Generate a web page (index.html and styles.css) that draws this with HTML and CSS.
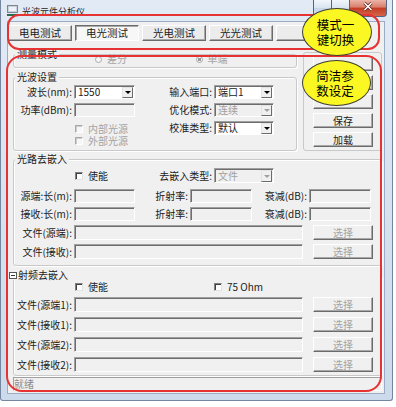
FILE: index.html
```html
<!DOCTYPE html>
<html>
<head>
    <title>光波元件分析仪</title>
    <link rel="stylesheet" href="styles.css">
</head>
<body>
    <div class="window">
        <div class="titlebar">
            <svg class="app-icon" width="11" height="12" viewBox="0 0 11 12">
                <rect x="0.5" y="0.5" width="10" height="7" fill="#c9d1da" stroke="#7d8793"/>
                <rect x="2" y="2" width="7" height="4" fill="#eef2f6"/>
                <rect x="0" y="9" width="11" height="2" fill="#2f6b4a"/>
            </svg>
            <span class="title">光波元件分析仪</span>
            <div class="caption">
                <span class="cap cap-min"></span>
                <span class="cap cap-max"></span>
                <span class="cap cap-close">
                    <svg width="10" height="9" viewBox="0 0 10 9">
                        <path d="M1.5 1 8.5 8M8.5 1 1.5 8" stroke="#5b1d16" stroke-width="3"/>
                        <path d="M1.5 1 8.5 8M8.5 1 1.5 8" stroke="#fff" stroke-width="1.6"/>
                    </svg>
                </span>
            </div>
        </div>

        <div class="client">
            <!-- mode switch buttons (the last one sits under the callout) -->
            <div class="modes">
                <div class="mode-btn">电电测试</div>
                <div class="mode-btn on">电光测试</div>
                <div class="mode-btn">光电测试</div>
                <div class="mode-btn">光光测试</div>
                <div class="mode-btn"></div>
            </div>

            <div class="upper">
                <div class="upper-left">
                    <div class="group mode-group">
                        <div class="group-title">测量模式</div>
                        <div class="radio-row">
                            <span class="radio"><i></i>差分</span>
                            <span class="radio on"><i></i>单端</span>
                        </div>
                    </div>

                    <div class="group wave-group">
                        <div class="group-title">光波设置</div>
                        <div class="wave-grid">
                            <label>波长(nm):</label>
                            <div class="combo"><span>1550</span><i class="drop"></i></div>
                            <label>输入端口:</label>
                            <div class="combo"><span>端口1</span><i class="drop"></i></div>

                            <label>功率(dBm):</label>
                            <div class="edit off"></div>
                            <label>优化模式:</label>
                            <div class="combo off"><span>连续</span><i class="drop"></i></div>

                            <div class="checks">
                                <span class="check off"><i></i>内部光源</span>
                                <span class="check off"><i></i>外部光源</span>
                            </div>
                            <label class="cal-label">校准类型:</label>
                            <div class="combo cal-combo"><span>默认</span><i class="drop"></i></div>
                        </div>
                    </div>
                </div>

                <!-- the top three buttons are covered by the callout -->
                <div class="side-panel">
                    <div class="btn"></div>
                    <div class="btn"></div>
                    <div class="btn"></div>
                    <div class="btn">保存</div>
                    <div class="btn">加载</div>
                </div>
            </div>

            <div class="group optic-group">
                <div class="group-title">光路去嵌入</div>
                <div class="row-top">
                    <span class="check"><i></i>使能</span>
                    <label>去嵌入类型:</label>
                    <div class="combo off"><span>文件</span><i class="drop"></i></div>
                </div>
                <div class="len-grid">
                    <label>源端:长(m):</label><div class="edit off"></div>
                    <label>折射率:</label><div class="edit off"></div>
                    <label>衰减(dB):</label><div class="edit off"></div>
                    <label>接收:长(m):</label><div class="edit off"></div>
                    <label>折射率:</label><div class="edit off"></div>
                    <label>衰减(dB):</label><div class="edit off"></div>
                </div>
                <div class="file-grid">
                    <label>文件(源端):</label><div class="edit off"></div><div class="btn off">选择</div>
                    <label>文件(接收):</label><div class="edit off"></div><div class="btn off">选择</div>
                </div>
            </div>

            <div class="group rf-group">
                <div class="group-title rf-title"><i class="fold"></i>射频去嵌入</div>
                <div class="row-top rf-top">
                    <span class="check"><i></i>使能</span>
                    <span class="check ohm"><i></i>75 Ohm</span>
                </div>
                <div class="file-grid rf-files">
                    <label>文件(源端1):</label><div class="edit off"></div><div class="btn off">选择</div>
                    <label>文件(接收1):</label><div class="edit off"></div><div class="btn off">选择</div>
                    <label>文件(源端2):</label><div class="edit off"></div><div class="btn off">选择</div>
                    <label>文件(接收2):</label><div class="edit off"></div><div class="btn off">选择</div>
                </div>
            </div>

            <div class="status">就绪</div>
        </div>
    </div>

    <!-- annotations drawn over the dialog -->
    <div class="mark mark-modes"></div>
    <div class="mark mark-params"></div>
    <div class="callout callout-modes">模式一<br>键切换</div>
    <div class="callout callout-params">简洁参<br>数设定</div>
</body>
</html>
```

FILE: styles.css
```css
* {
  box-sizing: border-box;
}

body {
  margin: 0;
  position: relative;
  width: 396px;
  height: 407px;
  overflow: hidden;
  background: #fff;
  font-family: "Noto Sans CJK SC", "Liberation Sans", sans-serif;
  font-size: 10px;
  line-height: 12px;
  color: #1b1b1b;
}

/* window frame */
.window {
  display: flex;
  flex-direction: column;
  width: 393px;
  height: 401px;
  padding: 0 7px 6px 6px;
  background: linear-gradient(#e2eaf5, #cddaeb);
  border: 1px solid #74879f;
  border-top: 0;
  border-radius: 0 0 3px 3px;
}

.titlebar {
  display: flex;
  flex: none;
  height: 21px;
}

.app-icon {
  flex: none;
  margin-top: 5px;
}

.title {
  margin: 6px 0 0 4px;
  font-size: 9px;
  line-height: 11px;
  color: #1e1e1e;
}

.caption {
  display: flex;
  height: 17px;
  margin: 0 -2px 0 auto;
}

.cap {
  height: 17px;
  border: 1px solid #53657f;
  border-top: 0;
}

.cap-min {
  width: 19px;
  border-radius: 0 0 0 4px;
  background: linear-gradient(#f2f6fb, #d9e4f1 50%, #c4d5ea 51%, #d7e4f3);
}

.cap-max {
  width: 18px;
  border-left: 0;
  background: linear-gradient(#f2f6fb, #d9e4f1 50%, #c4d5ea 51%, #d7e4f3);
}

.cap-close {
  width: 37px;
  border-left: 0;
  border-radius: 0 0 4px 0;
  padding-bottom: 3px;
  display: flex;
  align-items: center;
  justify-content: center;
  background: linear-gradient(#ebb4a8, #d97e6a 45%, #c43b22 50%, #d4654b);
}

.client {
  flex: 1;
  display: flex;
  flex-direction: column;
  background: #f0f0f0;
  border: 1px solid #9badc4;
}

/* mode buttons */
.modes {
  display: flex;
  flex: none;
  gap: 3px;
  margin-top: 3px;
}

.mode-btn {
  width: 64px;
  height: 16px;
  background: #ececec;
  border: 1px solid;
  border-color: #fff #6b6b6b #6b6b6b #fff;
  box-shadow: inset -1px -1px #a8a8a8;
  font-size: 10.5px;
  line-height: 14px;
  text-align: center;
  white-space: nowrap;
}

.mode-btn.on {
  background: #f7f7f7;
  border-color: #6b6b6b #fff #fff #6b6b6b;
  box-shadow: inset 1px 1px #a8a8a8;
}

/* shared controls */
.group {
  border: 1px solid #c9c9c9;
  border-radius: 3px;
  box-shadow: inset 1px 1px #fff, 1px 1px 0 #fff;
}

.group-title {
  display: table;
  height: 10px;
  margin: -6px 0 0 1px;
  padding: 0 2px;
  background: #f0f0f0;
  line-height: 10px;
  white-space: nowrap;
}

label {
  padding-right: 2px;
  text-align: right;
  white-space: nowrap;
  align-self: center;
}

.edit {
  background: #fff;
  border: 1px solid;
  border-color: #a0a0a0 #fff #fff #a0a0a0;
  box-shadow: inset 1px 1px #6d6d6d;
}

.edit.off {
  background: #f0f0f0;
}

.combo {
  display: flex;
  align-items: center;
  padding-left: 3px;
  background: #fff;
  border: 1px solid;
  border-color: #a0a0a0 #fff #fff #a0a0a0;
  box-shadow: inset 1px 1px #6d6d6d;
  white-space: nowrap;
}

.combo span {
  flex: 1;
}

.drop {
  display: flex;
  align-items: center;
  justify-content: center;
  align-self: stretch;
  width: 11px;
  margin: 1px 1px 0 0;
  background: #f0f0f0;
  border: 1px solid;
  border-color: #e3e3e3 #6b6b6b #6b6b6b #e3e3e3;
}

.drop::after {
  content: "";
  border-left: 3px solid transparent;
  border-right: 3px solid transparent;
  border-top: 3px solid #000;
}

.combo.off {
  background: #f0f0f0;
  color: #a0a0a0;
}

.combo.off .drop::after {
  border-top-color: #a0a0a0;
}

.check {
  display: flex;
  align-items: center;
  gap: 5px;
  white-space: nowrap;
}

.check i {
  width: 8px;
  height: 8px;
  background: #fff;
  border: 1px solid;
  border-color: #808080 #e3e3e3 #e3e3e3 #808080;
  box-shadow: inset 1px 1px #404040;
}

.check.off {
  color: #a3a3a3;
}

.check.off i {
  background: #f6f6f6;
  border-color: #a8a8a8 #fff #fff #a8a8a8;
  box-shadow: inset 1px 1px #cdcdcd;
}

.btn {
  height: 15px;
  background: #f0f0f0;
  border: 1px solid;
  border-color: #fff #6b6b6b #6b6b6b #fff;
  box-shadow: inset -1px -1px #a8a8a8;
  line-height: 13px;
  text-align: center;
}

.btn.off {
  color: #a3a3a3;
}

/* upper area */
.upper {
  display: flex;
  flex: none;
  gap: 6px;
  height: 99px;
  margin: 11px 0 0 5px;
}

.upper-left {
  width: 284px;
  padding-top: 2px;
}

.mode-group {
  height: 14px;
}

.radio-row {
  display: flex;
  align-items: center;
  height: 8px;
  margin-top: -4px;
  padding-left: 81px;
}

.radio {
  display: flex;
  align-items: center;
  gap: 5px;
  width: 103px;
  color: #a3a3a3;
}

.radio i {
  width: 7px;
  height: 7px;
  border-radius: 50%;
  border: 1px solid #a9a9a9;
  background: #f6f6f6;
}

.radio.on i {
  background: radial-gradient(circle, #9a9a9a 0 1.5px, #f6f6f6 2px);
}

.wave-group {
  height: 74px;
  margin-top: 9px;
}

.wave-grid {
  display: grid;
  grid-template-columns: 60px 61px 79px 60px;
  grid-template-rows: 14px 14px 14px 8px;
  row-gap: 4px;
  margin-top: 3px;
}

.checks {
  grid-column: 2 / span 2;
  grid-row: 3 / span 2;
  display: flex;
  flex-direction: column;
  justify-content: center;
  padding: 2px 0 0 1px;
}

.checks .check {
  height: 12px;
}

.cal-label {
  grid-column: 3;
  grid-row: 3;
}

.cal-combo {
  grid-column: 4;
  grid-row: 3;
}

.side-panel {
  display: flex;
  flex-direction: column;
  gap: 4px;
  width: 79px;
  padding: 3px 0 0 9px;
  border: 1px solid #c9c9c9;
  border-radius: 3px;
}

.side-panel .btn {
  width: 60px;
}

/* de-embedding groups */
.optic-group,
.rf-group {
  flex: none;
  width: 369px;
  margin-left: 5px;
}

.optic-group {
  height: 107px;
  margin-top: 8px;
}

.rf-group {
  height: 101px;
  margin-top: 9px;
}

.row-top {
  display: grid;
  grid-template-columns: 60px 61px 79px 60px;
  height: 15px;
  margin-top: 4px;
}

.row-top .check {
  grid-column: 2;
  padding-left: 1px;
}

.rf-top {
  height: 11px;
  margin-top: 1px;
}

.rf-top .ohm {
  grid-column: 4;
  padding-left: 0;
}

.len-grid {
  display: grid;
  grid-template-columns: 60px 61px 55px 62px 57px 62px;
  grid-auto-rows: 14px;
  row-gap: 4px;
  margin-top: 6px;
}

.file-grid {
  display: grid;
  grid-template-columns: 60px 229px 70px;
  grid-auto-rows: 15px;
  row-gap: 4px;
  margin-top: 4px;
}

.file-grid .btn {
  margin-left: 10px;
}

.rf-files {
  row-gap: 5px;
  margin-top: 5px;
}

.rf-title {
  display: flex;
  align-items: center;
  gap: 1px;
  margin-left: -5px;
  padding-left: 0;
}

.fold {
  position: relative;
  width: 8px;
  height: 7px;
  border: 1px solid #555;
  background: #fff;
}

.fold::after {
  content: "";
  position: absolute;
  left: 1px;
  right: 1px;
  top: 2px;
  height: 1px;
  background: #333;
}

.status {
  flex: none;
  width: 369px;
  height: 14px;
  margin: 1px 0 0 5px;
  border: 1px solid;
  border-color: #a0a0a0 #fff #fff #a0a0a0;
  color: #8c8c8c;
  line-height: 12px;
}

/* red frames and yellow callouts */
.mark {
  position: absolute;
  border: 2px solid #e63232;
}

.mark-modes {
  left: 7px;
  top: 14px;
  width: 373px;
  height: 36px;
  border-radius: 12px;
}

.mark-params {
  left: 6px;
  top: 55px;
  width: 376px;
  height: 337px;
  border-radius: 16px;
}

.callout {
  position: absolute;
  display: flex;
  align-items: center;
  justify-content: center;
  padding-right: 3px;
  background: #fbf722;
  border: 1px solid #3d3d30;
  border-radius: 50%;
  color: #000;
  font-size: 12.5px;
  line-height: 15px;
  text-align: center;
}

.callout-modes {
  left: 302px;
  top: 8px;
  width: 70px;
  height: 48px;
}

.callout-params {
  left: 302px;
  top: 60px;
  width: 69px;
  height: 46px;
}
```
